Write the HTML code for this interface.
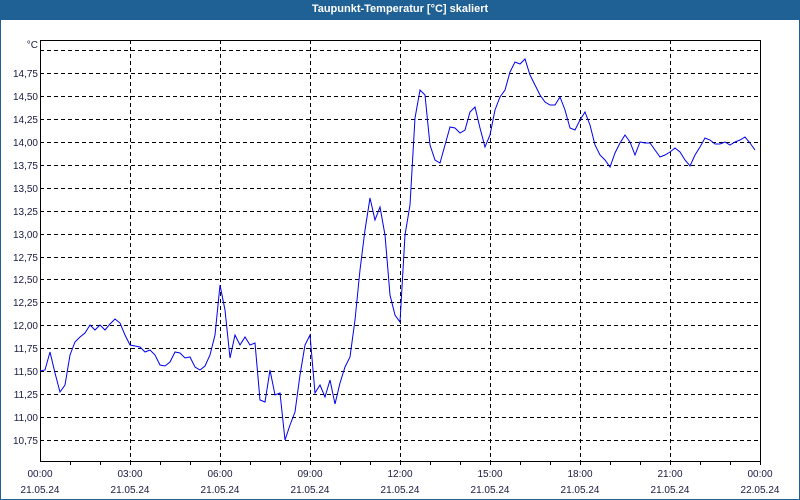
<!DOCTYPE html>
<html><head><meta charset="utf-8"><style>
html,body{margin:0;padding:0;background:#fff;}
body{width:800px;height:500px;position:relative;overflow:hidden;font-family:"Liberation Sans",Tahoma,sans-serif;}
.frame{position:absolute;left:0;top:0;width:798px;height:498px;border:1px solid #1f6095;}
.title{position:absolute;left:0;top:0;width:800px;height:20px;background:#1f6095;color:#fff;font-size:11px;font-weight:bold;text-align:center;line-height:19px;}
svg{position:absolute;left:0;top:0;}
svg text{font-family:"Liberation Sans",Tahoma,sans-serif;font-size:10px;fill:#1a1a40;}
</style></head><body>
<div class="frame"></div>
<div class="title">Taupunkt-Temperatur [°C] skaliert</div>
<svg width="800" height="500" viewBox="0 0 800 500">
<g stroke="#000" stroke-width="1" stroke-dasharray="4,3" shape-rendering="crispEdges">
<line x1="40" y1="50.5" x2="760" y2="50.5"/><line x1="40" y1="73.5" x2="760" y2="73.5"/><line x1="40" y1="96.5" x2="760" y2="96.5"/><line x1="40" y1="119.5" x2="760" y2="119.5"/><line x1="40" y1="142.5" x2="760" y2="142.5"/><line x1="40" y1="165.5" x2="760" y2="165.5"/><line x1="40" y1="188.5" x2="760" y2="188.5"/><line x1="40" y1="211.5" x2="760" y2="211.5"/><line x1="40" y1="234.5" x2="760" y2="234.5"/><line x1="40" y1="257.5" x2="760" y2="257.5"/><line x1="40" y1="279.5" x2="760" y2="279.5"/><line x1="40" y1="302.5" x2="760" y2="302.5"/><line x1="40" y1="325.5" x2="760" y2="325.5"/><line x1="40" y1="348.5" x2="760" y2="348.5"/><line x1="40" y1="371.5" x2="760" y2="371.5"/><line x1="40" y1="394.5" x2="760" y2="394.5"/><line x1="40" y1="417.5" x2="760" y2="417.5"/><line x1="40" y1="440.5" x2="760" y2="440.5"/>
<line x1="130.5" y1="40" x2="130.5" y2="461"/><line x1="220.5" y1="40" x2="220.5" y2="461"/><line x1="310.5" y1="40" x2="310.5" y2="461"/><line x1="400.5" y1="40" x2="400.5" y2="461"/><line x1="490.5" y1="40" x2="490.5" y2="461"/><line x1="580.5" y1="40" x2="580.5" y2="461"/><line x1="670.5" y1="40" x2="670.5" y2="461"/>
</g>
<rect x="40.5" y="40.5" width="720" height="421" fill="none" stroke="#000" shape-rendering="crispEdges"/>
<g stroke="#000" shape-rendering="crispEdges">
<line x1="70.5" y1="461" x2="70.5" y2="465"/><line x1="100.5" y1="461" x2="100.5" y2="465"/><line x1="130.5" y1="461" x2="130.5" y2="465"/><line x1="160.5" y1="461" x2="160.5" y2="465"/><line x1="190.5" y1="461" x2="190.5" y2="465"/><line x1="220.5" y1="461" x2="220.5" y2="465"/><line x1="250.5" y1="461" x2="250.5" y2="465"/><line x1="280.5" y1="461" x2="280.5" y2="465"/><line x1="310.5" y1="461" x2="310.5" y2="465"/><line x1="340.5" y1="461" x2="340.5" y2="465"/><line x1="370.5" y1="461" x2="370.5" y2="465"/><line x1="400.5" y1="461" x2="400.5" y2="465"/><line x1="430.5" y1="461" x2="430.5" y2="465"/><line x1="460.5" y1="461" x2="460.5" y2="465"/><line x1="490.5" y1="461" x2="490.5" y2="465"/><line x1="520.5" y1="461" x2="520.5" y2="465"/><line x1="550.5" y1="461" x2="550.5" y2="465"/><line x1="580.5" y1="461" x2="580.5" y2="465"/><line x1="610.5" y1="461" x2="610.5" y2="465"/><line x1="640.5" y1="461" x2="640.5" y2="465"/><line x1="670.5" y1="461" x2="670.5" y2="465"/><line x1="700.5" y1="461" x2="700.5" y2="465"/><line x1="730.5" y1="461" x2="730.5" y2="465"/><line x1="760.5" y1="461" x2="760.5" y2="465"/>
</g>
<g text-anchor="end">
<text x="38" y="48">°C</text>
<text x="38" y="77">14,75</text><text x="38" y="100">14,50</text><text x="38" y="123">14,25</text><text x="38" y="146">14,00</text><text x="38" y="169">13,75</text><text x="38" y="192">13,50</text><text x="38" y="215">13,25</text><text x="38" y="238">13,00</text><text x="38" y="261">12,75</text><text x="38" y="283">12,50</text><text x="38" y="306">12,25</text><text x="38" y="329">12,00</text><text x="38" y="352">11,75</text><text x="38" y="375">11,50</text><text x="38" y="398">11,25</text><text x="38" y="421">11,00</text><text x="38" y="444">10,75</text>
</g>
<g text-anchor="middle">
<text x="40" y="477">00:00</text><text x="40" y="493">21.05.24</text>
<text x="130" y="477">03:00</text><text x="130" y="493">21.05.24</text>
<text x="220" y="477">06:00</text><text x="220" y="493">21.05.24</text>
<text x="310" y="477">09:00</text><text x="310" y="493">21.05.24</text>
<text x="400" y="477">12:00</text><text x="400" y="493">21.05.24</text>
<text x="490" y="477">15:00</text><text x="490" y="493">21.05.24</text>
<text x="580" y="477">18:00</text><text x="580" y="493">21.05.24</text>
<text x="670" y="477">21:00</text><text x="670" y="493">21.05.24</text>
<text x="760" y="477">00:00</text><text x="760" y="493">22.05.24</text>
</g>
<polyline fill="none" stroke="#0000ee" stroke-width="1" points="40,371 45,370 50,352 55,373 60,392 65,385 70,355 75,342 80,337 85,333 90,325 95,330 100,325 105,330 110,324 115,319 120,323 125,335 130,345 135,346 140,347 145,352 150,350 155,355 160,365 165,366 170,362 175,352 180,353 185,358 190,357 195,367 200,370 205,366 210,355 215,335 220,285 225,310 230,358 235,335 240,345 245,337 250,345 255,343 260,400 265,402 270,370 275,395 280,393 285,440 290,425 295,412 300,375 305,345 310,335 315,393 320,385 325,397 330,380 335,404 340,383 345,367 350,357 355,320 360,270 365,230 370,198 375,220 380,207 385,235 390,295 395,315 400,322 405,235 410,205 415,118 420,90 425,95 430,145 435,160 440,163 445,145 450,127 455,128 460,133 465,130 470,112 475,107 480,128 485,147 490,135 495,110 500,97 505,90 510,72 515,62 520,64 525,59 530,75 535,85 540,95 545,102 550,105 555,105 560,97 565,110 570,128 575,130 580,120 585,112 590,125 595,145 600,155 605,160 610,167 615,153 620,143 625,135 630,142 635,155 640,142 645,143 650,143 655,150 660,157 665,155 670,152 675,148 680,152 685,160 690,166 695,155 700,147 705,138 710,140 715,144 720,144 725,142 730,145 735,142 740,140 745,137 750,143 755,150"/>
</svg>
</body></html>
